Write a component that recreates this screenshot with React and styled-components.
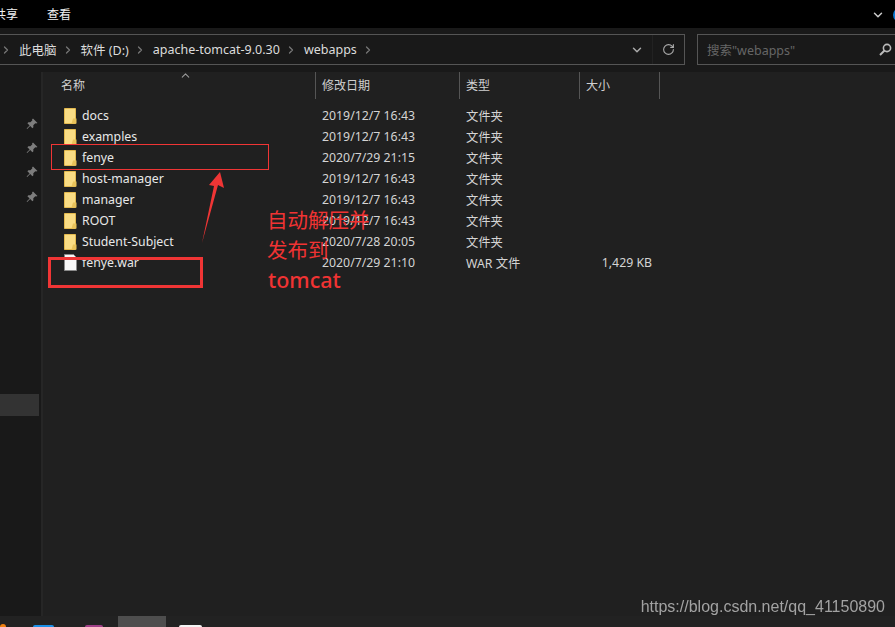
import React from 'react';
import styled, { createGlobalStyle } from 'styled-components';
import { ChevronDown, ChevronRight, ChevronUp, RotateCw } from 'lucide-react';

const Global = createGlobalStyle`
  html, body { margin: 0; padding: 0; background: #202020; }
  body { width: 895px; height: 627px; overflow: hidden; font-family: "Noto Sans", "Noto Sans CJK SC", sans-serif; }
`;

const files = [
  { name: 'docs', date: '2019/12/7 16:43', type: '文件夹' },
  { name: 'examples', date: '2019/12/7 16:43', type: '文件夹' },
  { name: 'fenye', date: '2020/7/29 21:15', type: '文件夹' },
  { name: 'host-manager', date: '2019/12/7 16:43', type: '文件夹' },
  { name: 'manager', date: '2019/12/7 16:43', type: '文件夹' },
  { name: 'ROOT', date: '2019/12/7 16:43', type: '文件夹' },
  { name: 'Student-Subject', date: '2020/7/28 20:05', type: '文件夹' },
  { name: 'fenye.war', date: '2020/7/29 21:10', type: 'WAR 文件', size: '1,429 KB', file: true },
];

const crumbs = ['此电脑', '软件 (D:)', 'apache-tomcat-9.0.30', 'webapps'];

const Page = styled.div`
  position: relative;
  width: 895px;
  height: 627px;
  display: flex;
  flex-direction: column;
  overflow: hidden;
  background: #202020;
`;

// ribbon tabs
const TopBar = styled.div`
  height: 28px;
  background: #000;
  display: flex;
  align-items: center;
  gap: 29px;
  padding-top: 2px;
  box-sizing: border-box;
  flex-shrink: 0;
`;
const Tab = styled.span`
  color: #f0f0f0;
  font-size: 12px;
  line-height: 16px;
  &:first-child { margin-left: -6px; }
`;
const TopRight = styled.div`
  margin-left: auto;
  display: flex;
  align-items: center;
  gap: 8px;
  margin-right: -12px;
  color: #ccc;
`;
const HelpDot = styled.span`
  width: 14px;
  height: 14px;
  border-radius: 50%;
  background: #0a78d0;
`;

const NavBar = styled.div`
  height: 44px;
  background: #191919;
  display: flex;
  padding-top: 6px;
  box-sizing: border-box;
  flex-shrink: 0;
`;
const Address = styled.div`
  width: 686px;
  height: 31px;
  margin-left: -1px;
  box-sizing: border-box;
  border: 1px solid #555;
  display: flex;
  align-items: center;
  flex-shrink: 0;
`;
const Crumb = styled.span`
  color: #dcdcdc;
  font-size: 12.5px;
  margin: 0 5px 0 7px;
  white-space: nowrap;
`;
const Sep = styled(ChevronRight)`
  color: #777;
  flex-shrink: 0;
`;
const AddressEnd = styled.div`
  margin-left: auto;
  display: flex;
  align-items: center;
  height: 100%;
  color: #aaa;
`;
const Drop = styled.div`
  width: 32px;
  height: 100%;
  display: flex;
  align-items: center;
  justify-content: center;
  border-right: 1px solid #222;
  box-sizing: border-box;
`;
const Refresh = styled.div`
  width: 31px;
  display: flex;
  justify-content: center;
`;
const Search = styled.div`
  width: 206px;
  height: 31px;
  margin-left: 12px;
  box-sizing: border-box;
  border: 1px solid #555;
  display: flex;
  align-items: center;
  padding-left: 9px;
  color: #666;
  font-size: 12.5px;
  flex-shrink: 0;
`;
const SearchIcon = styled.svg`
  margin-left: 84px;
  flex-shrink: 0;
`;

const Body = styled.div`
  flex: 1;
  display: flex;
  min-height: 0;
`;
const Sidebar = styled.div`
  width: 41px;
  background: #191919;
  border-right: 2px solid #262626;
  flex-shrink: 0;
  display: flex;
  flex-direction: column;
`;
const Pins = styled.div`
  display: flex;
  flex-direction: column;
  align-items: flex-end;
  gap: 12.2px;
  padding: 46px 3px 0 0;
`;
const NavSelected = styled.div`
  width: 39px;
  height: 22px;
  background: #333;
  margin-top: 191px;
`;

const Main = styled.div`
  flex: 1;
  background: #202020;
`;
const Head = styled.div`
  height: 27px;
  display: grid;
  grid-template-columns: 273px 144px 120px 80px;
  position: relative;
`;
const HeadCell = styled.div`
  border-right: 1px solid #555;
  color: #d0d0d0;
  font-size: 12px;
  line-height: 27px;
  padding-left: ${(p) => p.$pad}px;
`;
const SortCaret = styled(ChevronUp)`
  position: absolute;
  left: 136px;
  top: -3px;
  color: #999;
`;
const Rows = styled.div`
  padding-top: 6px;
`;
const Row = styled.div`
  height: 21px;
  display: grid;
  grid-template-columns: 273px 144px 120px 80px;
  align-items: center;
  font-size: 12.3px;
  color: #d4d4d4;
`;
const NameCell = styled.div`
  display: flex;
  align-items: center;
  gap: 5px;
  padding-left: 21px;
  color: #e8e8e8;
`;
const Cell = styled.div`
  padding-left: 6px;
  white-space: nowrap;
`;
const SizeCell = styled.div`
  padding-right: 8px;
  text-align: right;
  white-space: nowrap;
`;

const Taskbar = styled.div`
  height: 11px;
  background: #222;
  display: flex;
  align-items: flex-end;
  flex-shrink: 0;
`;
const TaskIcon = styled.span`
  width: ${(p) => p.$w}px;
  height: ${(p) => p.$h}px;
  margin-left: ${(p) => p.$left}px;
  background: ${(p) => p.$color};
  border-radius: ${(p) => p.$round}px ${(p) => p.$round}px 0 0;
  flex-shrink: 0;
`;

const Box = styled.div`
  position: absolute;
  box-sizing: border-box;
  left: ${(p) => p.$x}px;
  top: ${(p) => p.$y}px;
  width: ${(p) => p.$w}px;
  height: ${(p) => p.$h}px;
  border: ${(p) => p.$b}px solid #f03535;
`;
const Arrow = styled.svg`
  position: absolute;
  left: 198px;
  top: 168px;
`;
const Note = styled.div`
  position: absolute;
  left: 267px;
  top: 204px;
  color: #f03333;
  font-size: 20.5px;
  line-height: 30px;
  white-space: nowrap;
  font-family: "Noto Sans CJK SC", "Noto Sans", sans-serif;
`;
const NoteLatin = styled.span`
  font-family: "Noto Sans", sans-serif;
  font-size: 21.5px;
  font-weight: 500;
  margin-left: 1px;
`;
const Watermark = styled.div`
  position: absolute;
  right: 10px;
  top: 597px;
  color: #a2a2a2;
  font-size: 16px;
  line-height: 20px;
  font-family: "Liberation Sans", sans-serif;
  filter: blur(0.3px);
`;

const Folder = () => (
  <svg width="13" height="17" viewBox="0 0 13 17">
    <path d="M0.5 1.5h11v15h-11z" fill="#f9dc84" stroke="#e3b94e" />
    <path d="M9 11.5h3.5v5h-5z" fill="#e8c25a" />
  </svg>
);

const Doc = () => (
  <svg width="13" height="17" viewBox="0 0 13 17">
    <path d="M0.5 0.5h9l3 3v13h-12z" fill="#f6f6f6" stroke="#8a8a8a" />
  </svg>
);

const Pin = () => (
  <svg width="12" height="12" viewBox="0 0 12 12">
    <path d="M7 0.5l4.5 4.5-1.3 0.6-0.9-0.4-2 2 0.1 2-1 1-2.2-2.2-3 3-0.6-0.6 3-3-2.2-2.2 1-1 2 0.1 2-2-0.4-0.9z" fill="#7d7d7d" />
  </svg>
);

export default function App() {
  return (
    <Page>
      <Global />
      <TopBar>
        <Tab>共享</Tab>
        <Tab>查看</Tab>
        <TopRight>
          <ChevronDown size={14} strokeWidth={2.5} />
          <HelpDot />
        </TopRight>
      </TopBar>
      <NavBar>
        <Address>
          <Sep size={12} strokeWidth={2.5} />
          {crumbs.map((c) => (
            <React.Fragment key={c}>
              <Crumb>{c}</Crumb>
              <Sep size={12} strokeWidth={2.5} />
            </React.Fragment>
          ))}
          <AddressEnd>
            <Drop>
              <ChevronDown size={14} strokeWidth={2.5} />
            </Drop>
            <Refresh>
              <RotateCw size={13} strokeWidth={2} />
            </Refresh>
          </AddressEnd>
        </Address>
        <Search>
          搜索"webapps"
          <SearchIcon width="13" height="13" viewBox="0 0 13 13">
            <circle cx="8" cy="5" r="3.6" fill="none" stroke="#bbb" strokeWidth="1.6" />
            <path d="M5.5 7.5L1 12" stroke="#bbb" strokeWidth="2" />
          </SearchIcon>
        </Search>
      </NavBar>
      <Body>
        <Sidebar>
          <Pins>
            <Pin />
            <Pin />
            <Pin />
            <Pin />
          </Pins>
          <NavSelected />
        </Sidebar>
        <Main>
          <Head>
            <HeadCell $pad={18}>名称</HeadCell>
            <HeadCell $pad={6}>修改日期</HeadCell>
            <HeadCell $pad={6}>类型</HeadCell>
            <HeadCell $pad={6}>大小</HeadCell>
            <SortCaret size={13} />
          </Head>
          <Rows>
            {files.map((f) => (
              <Row key={f.name}>
                <NameCell>
                  {f.file ? <Doc /> : <Folder />}
                  {f.name}
                </NameCell>
                <Cell>{f.date}</Cell>
                <Cell>{f.type}</Cell>
                <SizeCell>{f.size}</SizeCell>
              </Row>
            ))}
          </Rows>
        </Main>
      </Body>
      <Taskbar>
        <TaskIcon $left={0} $w={6} $h={3} $round={3} $color="#f08010" />
        <TaskIcon $left={27} $w={21} $h={2} $round={3} $color="#1c90e8" />
        <TaskIcon $left={31} $w={18} $h={2} $round={8} $color="#a04088" />
        <TaskIcon $left={15} $w={48} $h={11} $round={0} $color="#4e4e4e" />
        <TaskIcon $left={13} $w={23} $h={2} $round={3} $color="#f4f4f4" />
      </Taskbar>

      <Box $x={51} $y={144} $w={218} $h={26} $b={1} />
      <Box $x={48} $y={257} $w={155} $h={31} $b={3} />
      <Arrow width="30" height="80" viewBox="0 0 30 80">
        <path d="M22 4L26 20 20 17 4 75 16 18 11 17z" fill="#f03535" />
      </Arrow>
      <Note>
        自动解压并
        <br />
        发布到
        <br />
        <NoteLatin>tomcat</NoteLatin>
      </Note>
      <Watermark>https://blog.csdn.net/qq_41150890</Watermark>
    </Page>
  );
}
